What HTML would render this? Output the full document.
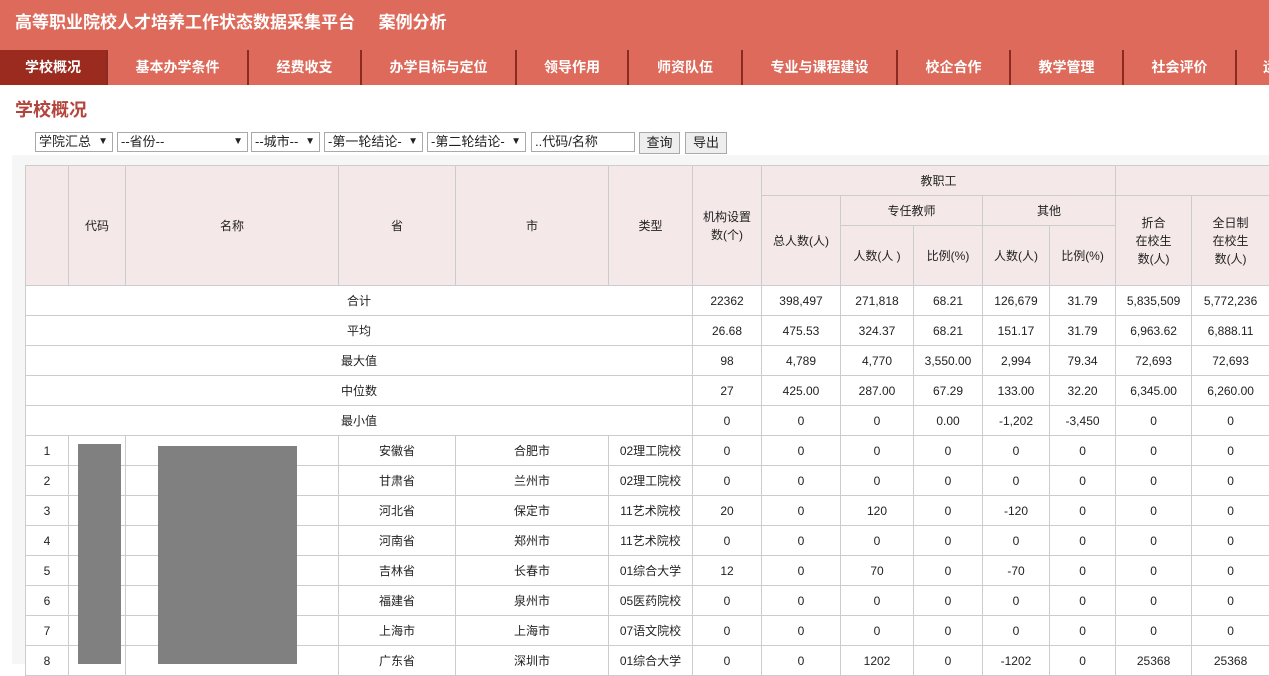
<!DOCTYPE html>
<html><head><meta charset="utf-8"><style>
*{margin:0;padding:0;box-sizing:border-box}
body{width:1269px;height:664px;overflow:hidden;background:#fff;font-family:"Liberation Sans","Noto Sans CJK SC",sans-serif;position:relative}
.hd{position:absolute;left:0;top:0;width:1269px;height:50px;background:#dd6a5a;color:#fff;font-weight:bold;font-size:17px;line-height:46px;padding-left:15px}
.nav{position:absolute;left:0;top:50px;width:1269px;height:35px;background:#dd6a5a}
.nav div{position:absolute;top:0;height:35px;line-height:35px;text-align:center;color:#fff;font-weight:bold;font-size:14px;border-right:2px solid #8a2a20;white-space:nowrap;overflow:hidden}
.nav .a{background:#9b2a1f}
.ttl{position:absolute;left:15px;top:96px;font-size:18px;font-weight:bold;color:#b2443c}
.f{position:absolute;top:132px;height:20px;border:1px solid #a9a9a9;background:#fff;font-size:13px;line-height:18px;padding-left:3px;color:#222}
.f b{position:absolute;right:4px;top:0;font-size:10px}
.btn{position:absolute;top:132px;height:22px;border:1px solid #a9a9a9;background:#eee;font-size:13px;line-height:20px;text-align:center;color:#222}
.panel{position:absolute;left:12px;top:155px;width:1257px;height:509px;background:#f6f6f6}
table{position:absolute;left:25px;top:165px;border-collapse:collapse;table-layout:fixed;width:1244px;background:#fff;font-size:12px;color:#222}
td{border:1px solid #ccc;text-align:center;height:30px;padding:0;overflow:hidden;white-space:nowrap;line-height:18px}
thead td{background:#f5e8e8}
.g{position:absolute;background:#808080}
</style></head><body>
<div class="hd">高等职业院校人才培养工作状态数据采集平台&nbsp;&nbsp;&nbsp;&nbsp;&nbsp;案例分析</div>
<div class="nav">
<div class="a" style="left:0;width:108px">学校概况</div>
<div style="left:108px;width:141px">基本办学条件</div>
<div style="left:249px;width:113px">经费收支</div>
<div style="left:362px;width:155px">办学目标与定位</div>
<div style="left:517px;width:112px">领导作用</div>
<div style="left:629px;width:114px">师资队伍</div>
<div style="left:743px;width:155px">专业与课程建设</div>
<div style="left:898px;width:113px">校企合作</div>
<div style="left:1011px;width:113px">教学管理</div>
<div style="left:1124px;width:113px">社会评价</div>
<div style="left:1237px;width:60px;border:none;text-align:left;padding-left:26px">运</div>
</div>
<div class="ttl">学校概况</div>
<div class="f" style="left:35px;width:78px">学院汇总<b>▼</b></div>
<div class="f" style="left:117px;width:131px">--省份--<b>▼</b></div>
<div class="f" style="left:251px;width:69px">--城市--<b>▼</b></div>
<div class="f" style="left:324px;width:99px">-第一轮结论-<b>▼</b></div>
<div class="f" style="left:427px;width:99px">-第二轮结论-<b>▼</b></div>
<div class="f" style="left:531px;width:104px">..代码/名称</div>
<div class="btn" style="left:639px;width:41px">查询</div>
<div class="btn" style="left:685px;width:42px">导出</div>
<div class="panel"></div>
<table>
<colgroup><col style="width:43px"><col style="width:57px"><col style="width:213px"><col style="width:117px"><col style="width:153px"><col style="width:84px"><col style="width:69px"><col style="width:79px"><col style="width:73px"><col style="width:69px"><col style="width:67px"><col style="width:66px"><col style="width:76px"><col style="width:78px"></colgroup>
<thead>
<tr><td rowspan="3" style="height:120px"></td><td rowspan="3">代码</td><td rowspan="3">名称</td><td rowspan="3">省</td><td rowspan="3">市</td><td rowspan="3">类型</td><td rowspan="3">机构设置<br>数(个)</td><td colspan="5">教职工</td><td colspan="2"></td></tr>
<tr><td rowspan="2">总人数(人)</td><td colspan="2">专任教师</td><td colspan="2">其他</td><td rowspan="2">折合<br>在校生<br>数(人)</td><td rowspan="2">全日制<br>在校生<br>数(人)</td></tr>
<tr><td style="height:60px">人数(人 )</td><td>比例(%)</td><td>人数(人)</td><td>比例(%)</td></tr>
</thead>
<tbody>
<tr><td colspan="6">合计</td><td>22362</td><td>398,497</td><td>271,818</td><td>68.21</td><td>126,679</td><td>31.79</td><td>5,835,509</td><td>5,772,236</td></tr>
<tr><td colspan="6">平均</td><td>26.68</td><td>475.53</td><td>324.37</td><td>68.21</td><td>151.17</td><td>31.79</td><td>6,963.62</td><td>6,888.11</td></tr>
<tr><td colspan="6">最大值</td><td>98</td><td>4,789</td><td>4,770</td><td>3,550.00</td><td>2,994</td><td>79.34</td><td>72,693</td><td>72,693</td></tr>
<tr><td colspan="6">中位数</td><td>27</td><td>425.00</td><td>287.00</td><td>67.29</td><td>133.00</td><td>32.20</td><td>6,345.00</td><td>6,260.00</td></tr>
<tr><td colspan="6">最小值</td><td>0</td><td>0</td><td>0</td><td>0.00</td><td>-1,202</td><td>-3,450</td><td>0</td><td>0</td></tr>
<tr><td>1</td><td></td><td></td><td>安徽省</td><td>合肥市</td><td>02理工院校</td><td>0</td><td>0</td><td>0</td><td>0</td><td>0</td><td>0</td><td>0</td><td>0</td></tr>
<tr><td>2</td><td></td><td></td><td>甘肃省</td><td>兰州市</td><td>02理工院校</td><td>0</td><td>0</td><td>0</td><td>0</td><td>0</td><td>0</td><td>0</td><td>0</td></tr>
<tr><td>3</td><td></td><td></td><td>河北省</td><td>保定市</td><td>11艺术院校</td><td>20</td><td>0</td><td>120</td><td>0</td><td>-120</td><td>0</td><td>0</td><td>0</td></tr>
<tr><td>4</td><td></td><td></td><td>河南省</td><td>郑州市</td><td>11艺术院校</td><td>0</td><td>0</td><td>0</td><td>0</td><td>0</td><td>0</td><td>0</td><td>0</td></tr>
<tr><td>5</td><td></td><td></td><td>吉林省</td><td>长春市</td><td>01综合大学</td><td>12</td><td>0</td><td>70</td><td>0</td><td>-70</td><td>0</td><td>0</td><td>0</td></tr>
<tr><td>6</td><td></td><td></td><td>福建省</td><td>泉州市</td><td>05医药院校</td><td>0</td><td>0</td><td>0</td><td>0</td><td>0</td><td>0</td><td>0</td><td>0</td></tr>
<tr><td>7</td><td></td><td></td><td>上海市</td><td>上海市</td><td>07语文院校</td><td>0</td><td>0</td><td>0</td><td>0</td><td>0</td><td>0</td><td>0</td><td>0</td></tr>
<tr><td>8</td><td></td><td></td><td>广东省</td><td>深圳市</td><td>01综合大学</td><td>0</td><td>0</td><td>1202</td><td>0</td><td>-1202</td><td>0</td><td>25368</td><td>25368</td></tr>
</tbody>
</table>
<div class="g" style="left:78px;top:444px;width:43px;height:220px"></div>
<div class="g" style="left:158px;top:446px;width:139px;height:218px"></div>
</body></html>
